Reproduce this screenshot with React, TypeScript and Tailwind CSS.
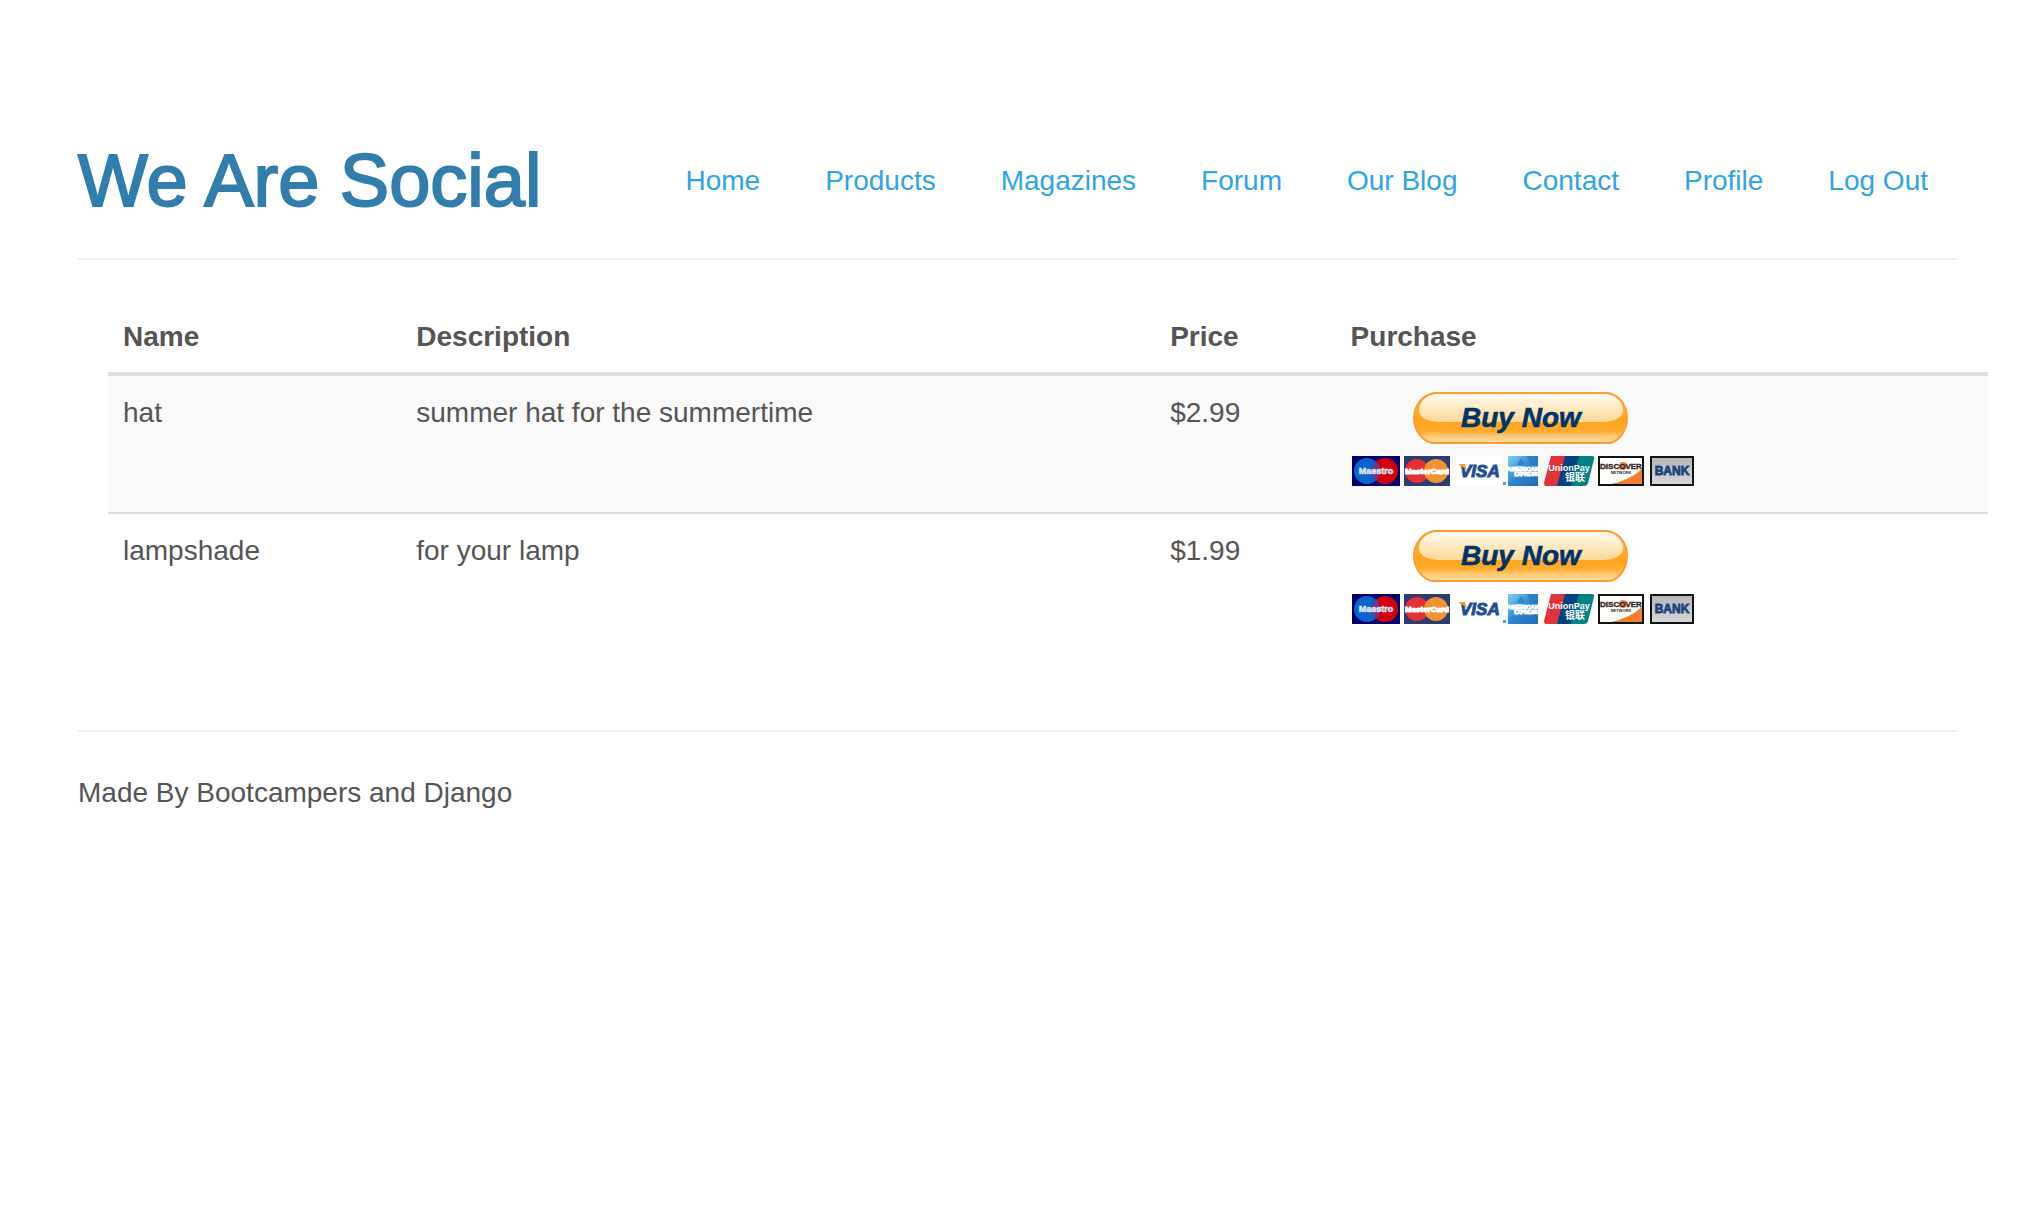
const links = ['Home', 'Products', 'Magazines', 'Forum', 'Our Blog', 'Contact', 'Profile', 'Log Out'];

const products = [
  { name: 'hat', description: 'summer hat for the summertime', price: '$2.99' },
  { name: 'lampshade', description: 'for your lamp', price: '$1.99' },
];

function BuyNowArt({ id }: { id: string }) {
  const fill = (name: string) => `url(#${id}-${name})`;
  return (
    <svg width="342" height="94" viewBox="0 0 342 94" aria-hidden="true" fontFamily='"Liberation Sans", Arial, sans-serif'>
      <defs>
        <linearGradient id={`${id}-pill`} x1="0" y1="0" x2="0" y2="1">
          <stop offset="0" stopColor="#ffb544" />
          <stop offset="0.55" stopColor="#ffa41f" />
          <stop offset="0.75" stopColor="#ffab2c" />
          <stop offset="0.9" stopColor="#ffd184" />
          <stop offset="1" stopColor="#ffe0a4" />
        </linearGradient>
        <linearGradient id={`${id}-gloss`} x1="0" y1="0" x2="0" y2="1">
          <stop offset="0" stopColor="#fffaf0" />
          <stop offset="0.5" stopColor="#fee9c3" />
          <stop offset="1" stopColor="#fdd795" />
        </linearGradient>
        <linearGradient id={`${id}-amex`} x1="0" y1="0" x2="1" y2="1">
          <stop offset="0" stopColor="#7fd0f5" />
          <stop offset="0.5" stopColor="#2f86cf" />
          <stop offset="1" stopColor="#2467b4" />
        </linearGradient>
        <linearGradient id={`${id}-bank`} x1="0" y1="0" x2="0" y2="1">
          <stop offset="0" stopColor="#b4b6ba" />
          <stop offset="1" stopColor="#d6d7d9" />
        </linearGradient>
      </defs>

      <path d="M82 1H256C267 3 275 13 275 26S267 49 258 51H80C70 49 62 38 62 26S70 3 82 1Z" fill={fill('pill')} stroke="#ff9c33" strokeWidth="2" />
      <path d="M84 2H254C264 3 271 10 271 18C271 26 262 30 250 30H88C76 30 67 26 67 18C67 10 74 3 84 2Z" fill={fill('gloss')} />
      <text x="109" y="35" fontSize="28" fontWeight="700" fontStyle="italic" fill="#003366" stroke="#003366" strokeWidth="0.6">Buy Now</text>

      <g fontWeight="700">
        <rect x="0" y="64" width="48" height="30" fill="#02006c" />
        <circle cx="15" cy="79" r="13" fill="#0a64cf" />
        <circle cx="33" cy="79" r="13" fill="#d2000b" />
        <path d="M24 69.500A13 13 0 0 1 24 88.500A13 13 0 0 1 24 69.500Z" fill="#6b3a86" />
        <text x="24" y="82" fontSize="9" textAnchor="middle" fill="#dfe3f5" stroke="#dfe3f5" strokeWidth="0.6">Maestro</text>

        <rect x="52" y="64" width="46" height="30" fill="#2e3b71" />
        <circle cx="65" cy="79" r="12" fill="#e33135" />
        <circle cx="84" cy="79" r="12" fill="#ee9433" />
        <text x="75" y="82" fontSize="8" textAnchor="middle" fill="#fff" stroke="#fff" strokeWidth="1">MasterCard</text>

        <rect x="104" y="64" width="46" height="30" fill="#fff" />
        <text x="108" y="85" fontSize="17" fontStyle="italic" fill="#1f4f93" stroke="#1f4f93" strokeWidth="1">VISA</text>
        <path d="M107 72H113L115 79C113 76 110 74 107 73Z" fill="#f0a22e" />

        <rect x="151" y="90" width="3" height="3" fill="#3fa6de" />
        <rect x="156" y="64" width="30" height="30" fill={fill('amex')} />
        <path d="M165 73L169 66L173 73ZM175 64H186V73H179Z" fill="#2b78c6" opacity="0.7" />
        <text x="171" y="79" fontSize="6" textAnchor="middle" fill="#fff" stroke="#fff" strokeWidth="1">AMERICAN</text>
        <text x="174" y="84" fontSize="5" textAnchor="middle" fill="#fff" stroke="#fff" strokeWidth="0.8">EXPRESS</text>

        <path d="M199 64H215L208 94H194Q192 94 192 91Z" fill="#e2333b" />
        <path d="M213 64H229L222 94H205Z" fill="#00447f" />
        <path d="M227 64H240Q243 64 242 67L236 91Q235 94 232 94H219Z" fill="#068183" />
        <text x="217" y="79" fontSize="9" textAnchor="middle" fill="#fff">UnionPay</text>
        <text x="223" y="89" fontSize="10" textAnchor="middle" fill="#fff" fontFamily='"Noto Sans CJK SC", sans-serif'>银联</text>

        <rect x="247" y="65" width="44" height="28" fill="#fff" />
        <path d="M259 92Q278 88 290 77V92Z" fill="#f08030" />
        <rect x="247" y="65" width="44" height="28" fill="none" stroke="#15130f" strokeWidth="2" />
        <circle cx="271" cy="74" r="4" fill="#ee8040" />
        <text x="269" y="77" fontSize="8" textAnchor="middle" fill="#33281f" stroke="#33281f" strokeWidth="0.4">DISCOVER</text>
        <text x="269" y="82" fontSize="4" textAnchor="middle" fill="#33281f">NETWORK</text>

        <rect x="299" y="65" width="42" height="28" fill={fill('bank')} stroke="#111316" strokeWidth="2" />
        <text x="320" y="83" fontSize="12" textAnchor="middle" fill="#1d4478" stroke="#1d4478" strokeWidth="0.8">BANK</text>
      </g>
    </svg>
  );
}

export default function App() {
  return (
    <div className="min-h-screen bg-white pt-[141px] pr-[82px] pl-[78px] font-['Liberation_Sans',Arial,sans-serif] text-[28px] leading-[40px] text-[#555555]">
      <header className="flex items-center justify-between border-b-2 border-[#eeeeee] pb-[37px]">
        <h1 className="text-[74px] leading-[80px] whitespace-nowrap text-[#317eac] [-webkit-text-stroke:2px_#317eac]">We Are Social</h1>
        <nav className="flex gap-[5px]">
          {links.map((link) => (
            <a key={link} href="#" className="px-[30px] whitespace-nowrap text-[#2fa4e7]">
              {link}
            </a>
          ))}
        </nav>
      </header>

      <main className="mt-10 -mr-[30px] ml-[30px]">
        <table className="w-full table-fixed border-collapse text-left">
          <colgroup>
            <col className="w-[15.6%]" />
            <col className="w-[40.1%]" />
            <col className="w-[9.6%]" />
            <col />
          </colgroup>
          <thead>
            <tr className="border-b-4 border-[#dddddd]">
              {['Name', 'Description', 'Price', 'Purchase'].map((title) => (
                <th key={title} scope="col" className="px-[15px] pt-[17px] pb-[15px] font-bold">
                  {title}
                </th>
              ))}
            </tr>
          </thead>
          <tbody>
            {products.map((product) => (
              <tr key={product.name} className="align-top odd:bg-[#f9f9f9] even:border-t-2 even:border-[#dddddd]">
                <td className="px-[15px] pt-[17px]">{product.name}</td>
                <td className="px-[15px] pt-[17px]">{product.description}</td>
                <td className="px-[15px] pt-[17px]">{product.price}</td>
                <td className="px-4 pt-4 pb-[26px]">
                  <button type="button" aria-label={`Buy ${product.name} now`} className="block cursor-pointer">
                    <BuyNowArt id={product.name} />
                  </button>
                </td>
              </tr>
            ))}
          </tbody>
        </table>
      </main>

      <footer className="mt-20 border-t-2 border-[#eeeeee] pt-[41px]">
        <p>Made By Bootcampers and Django</p>
      </footer>
    </div>
  );
}
